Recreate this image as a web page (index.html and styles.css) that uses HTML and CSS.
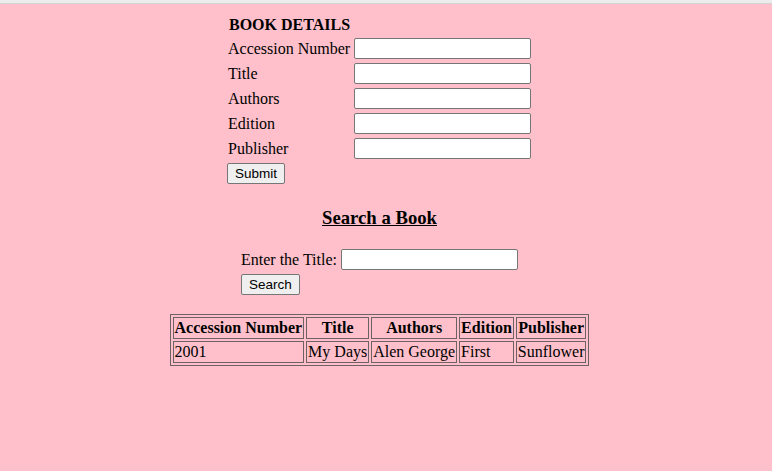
FILE: index.html
```html
<!DOCTYPE html>
<html>
<head>
<meta charset="utf-8">
<title>Book Details</title>
<link rel="stylesheet" href="styles.css">
</head>
<body>
<div class="topbar"></div>
<div class="page">
  <form class="book-form">
    <div class="form-title">BOOK DETAILS</div>
    <label class="field-label">Accession Number</label><input class="text-input" type="text">
    <label class="field-label">Title</label><input class="text-input" type="text">
    <label class="field-label">Authors</label><input class="text-input" type="text">
    <label class="field-label">Edition</label><input class="text-input" type="text">
    <label class="field-label">Publisher</label><input class="text-input" type="text">
    <button class="btn submit" type="button">Submit</button>
  </form>

  <h3 class="search-heading">Search a Book</h3>

  <form class="search-form">
    <div class="search-row">
      <label class="field-label">Enter the Title:</label><input class="text-input" type="text">
    </div>
    <button class="btn" type="button">Search</button>
  </form>

  <table class="results">
    <thead>
      <tr><th>Accession Number</th><th>Title</th><th>Authors</th><th>Edition</th><th>Publisher</th></tr>
    </thead>
    <tbody>
      <tr><td>2001</td><td>My Days</td><td>Alen George</td><td>First</td><td>Sunflower</td></tr>
    </tbody>
  </table>
</div>
</body>
</html>
```
FILE: styles.css
```css
html, body {
  margin: 0;
  padding: 0;
}
body {
  background: #ffc0cb;
  color: #000;
  font-family: "Liberation Serif", "Times New Roman", serif;
  font-size: 16px;
  min-height: 471px;
}
.topbar {
  height: 3px;
  background: #ececec;
  border-bottom: 1px solid #d4d4d4;
}
.page {
  width: 759px;
  display: flex;
  flex-direction: column;
  align-items: center;
}
.book-form {
  margin-top: 11px;
  display: grid;
  grid-template-columns: 122px 177px;
  column-gap: 4px;
  row-gap: 4px;
  align-items: center;
}
.form-title {
  grid-column: 1 / span 2;
  font-weight: bold;
  line-height: 19px;
  padding-left: 1px;
}
.field-label {
  line-height: 18px;
  white-space: nowrap;
}
.text-input {
  box-sizing: border-box;
  width: 177px;
  height: 21px;
  margin: 0;
  padding: 1px 2px;
  border: 1px solid #767676;
  border-radius: 2px;
  background: #fff;
  font-family: "Liberation Sans", Arial, sans-serif;
  font-size: 13.333px;
}
.btn {
  box-sizing: border-box;
  height: 21px;
  margin: 0;
  padding: 1px 7px;
  border: 1px solid #767676;
  border-radius: 2px;
  background: #efefef;
  color: #000;
  font-family: "Liberation Sans", Arial, sans-serif;
  font-size: 13.5px;
  line-height: 15px;
}
.submit {
  grid-column: 1 / span 2;
  justify-self: start;
  margin-left: -1px;
}
.search-heading {
  margin: 23px 0 0;
  font-size: 18.72px;
  font-weight: bold;
  text-decoration: underline;
  line-height: normal;
}
.search-form {
  margin-top: 20px;
  display: flex;
  flex-direction: column;
  align-items: flex-start;
  gap: 4px;
}
.search-row {
  display: flex;
  align-items: center;
  gap: 4px;
}
.results {
  margin-top: 19px;
  border-collapse: separate;
  border-spacing: 2px;
  border: 1px solid #6e6264;
}
.results th,
.results td {
  border: 1px solid #6e6264;
  padding: 1px;
  line-height: 18px;
  white-space: nowrap;
}
.results th {
  font-weight: bold;
  text-align: center;
}
.results td {
  text-align: left;
}
```
